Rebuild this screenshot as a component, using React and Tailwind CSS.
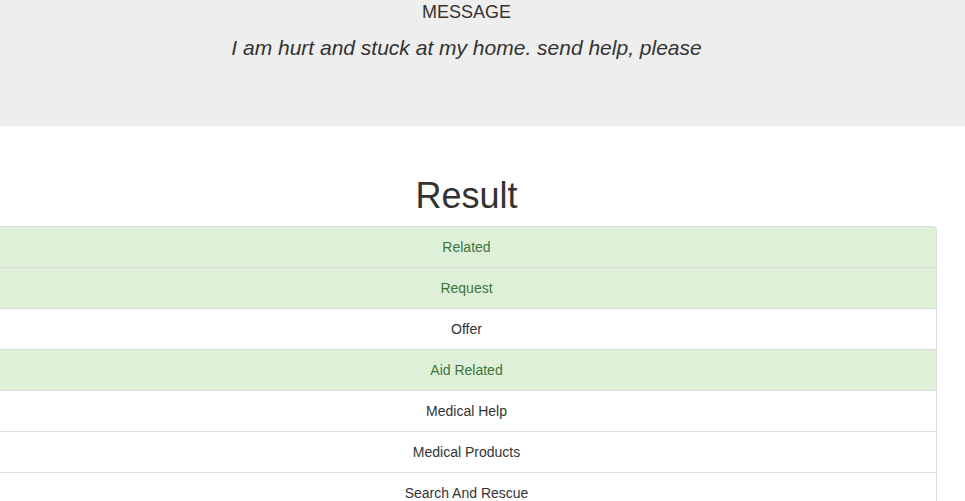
const categories = [
  { name: 'Related', on: true },
  { name: 'Request', on: true },
  { name: 'Offer', on: false },
  { name: 'Aid Related', on: true },
  { name: 'Medical Help', on: false },
  { name: 'Medical Products', on: false },
  { name: 'Search And Rescue', on: false },
  { name: 'Security', on: false },
  { name: 'Military', on: false },
];

export default function App() {
  return (
    <div className="h-[501px] overflow-hidden bg-white text-[#333] font-['Liberation_Sans',Arial,sans-serif] text-[14px]">
      <div className="h-[126px] bg-[#eeeeee] pt-[2px]">
        <div className="ml-[-4px] w-[941px] text-center">
          <h4 className="text-[18px] leading-[20px] uppercase">Message</h4>
          <p className="mt-[11px] text-[21px] leading-[30px] italic">I am hurt and stuck at my home. send help, please</p>
        </div>
      </div>

      <div className="ml-[-4px] w-[941px]">
        <h1 className="mt-[50px] mb-[10px] text-center text-[36px] leading-[40px]">Result</h1>

        <ul>
          {categories.map((c, i) => (
            <li
              key={c.name}
              className={`-mb-px border border-[#dddddd] py-[10px] text-center leading-5 ${i === 0 ? 'rounded-t-[4px]' : ''} ${c.on ? 'bg-[#dff0d8] text-[#3c763d]' : 'bg-white text-[#333]'}`}
            >
              {c.name}
            </li>
          ))}
        </ul>
      </div>
    </div>
  );
}
